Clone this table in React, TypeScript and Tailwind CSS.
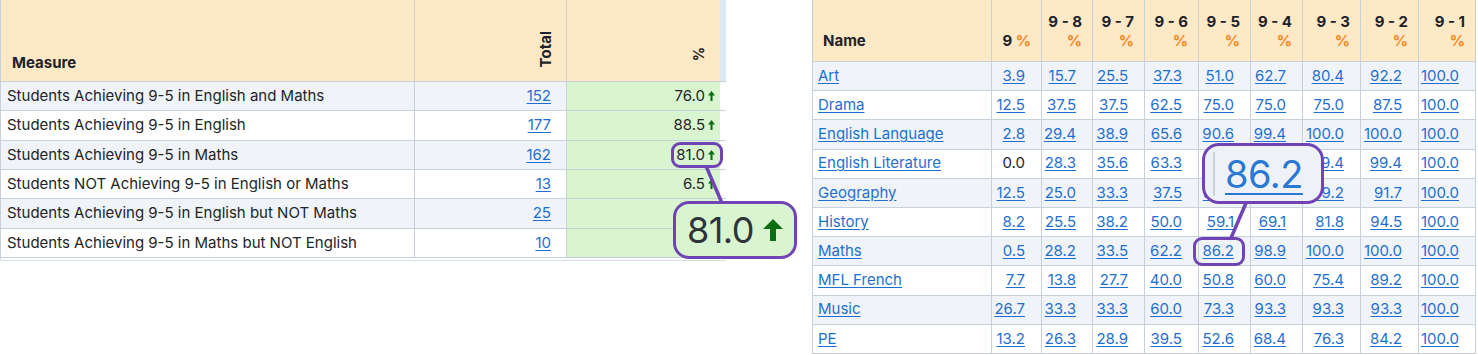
import React from 'react';

type MeasureRow = {
  label: string;
  total: number;
  pct: string;
};

const measures: MeasureRow[] = [
  { label: 'Students Achieving 9-5 in English and Maths', total: 152, pct: '76.0' },
  { label: 'Students Achieving 9-5 in English', total: 177, pct: '88.5' },
  { label: 'Students Achieving 9-5 in Maths', total: 162, pct: '81.0' },
  { label: 'Students NOT Achieving 9-5 in English or Maths', total: 13, pct: '6.5' },
  { label: 'Students Achieving 9-5 in English but NOT Maths', total: 25, pct: '12.5' },
  { label: 'Students Achieving 9-5 in Maths but NOT English', total: 10, pct: '5.0' },
];

const gradeCols = ['9', '9 - 8', '9 - 7', '9 - 6', '9 - 5', '9 - 4', '9 - 3', '9 - 2', '9 - 1'];
const gradeWidths = ['w-[50px]', 'w-[51px]', 'w-[52px]', 'w-[54px]', 'w-[52px]', 'w-[52px]', 'w-[58px]', 'w-[58px]', 'w-[57px]'];

const subjects: { name: string; values: string[] }[] = [
  { name: 'Art', values: ['3.9', '15.7', '25.5', '37.3', '51.0', '62.7', '80.4', '92.2', '100.0'] },
  { name: 'Drama', values: ['12.5', '37.5', '37.5', '62.5', '75.0', '75.0', '75.0', '87.5', '100.0'] },
  { name: 'English Language', values: ['2.8', '29.4', '38.9', '65.6', '90.6', '99.4', '100.0', '100.0', '100.0'] },
  { name: 'English Literature', values: ['0.0', '28.3', '35.6', '63.3', '83.9', '96.1', '99.4', '99.4', '100.0'] },
  { name: 'Geography', values: ['12.5', '25.0', '33.3', '37.5', '58.3', '70.8', '79.2', '91.7', '100.0'] },
  { name: 'History', values: ['8.2', '25.5', '38.2', '50.0', '59.1', '69.1', '81.8', '94.5', '100.0'] },
  { name: 'Maths', values: ['0.5', '28.2', '33.5', '62.2', '86.2', '98.9', '100.0', '100.0', '100.0'] },
  { name: 'MFL French', values: ['7.7', '13.8', '27.7', '40.0', '50.8', '60.0', '75.4', '89.2', '100.0'] },
  { name: 'Music', values: ['26.7', '33.3', '33.3', '60.0', '73.3', '93.3', '93.3', '93.3', '100.0'] },
  { name: 'PE', values: ['13.2', '26.3', '28.9', '39.5', '52.6', '68.4', '76.3', '84.2', '100.0'] },
];

function UpArrow({ className }: { className?: string }) {
  return (
    <svg viewBox="0 0 8 10" preserveAspectRatio="none" className={className} aria-hidden>
      <path d="M4 0 L8 4.6 H5.2 V10 H2.8 V4.6 H0 Z" fill="currentColor" />
    </svg>
  );
}

function MeasureTable() {
  return (
    <div className="w-[726px] shrink-0">
      <table className="table-fixed border-separate border-spacing-0 w-[726px] text-[15px] text-[#212529]">
        <colgroup>
          <col className="w-[415px]" />
          <col className="w-[152px]" />
          <col className="w-[153px]" />
          <col className="w-[6px]" />
        </colgroup>
        <thead>
          <tr className="h-[82px]">
            <th className="bg-[#fde9c5] border-l border-r border-b border-[#c6d1dc] text-left align-bottom pl-[11px] pb-[9px] text-[15px] font-bold text-[#1d232b] leading-[19px]">
              Measure
            </th>
            <th className="bg-[#fde9c5] border-r border-b border-[#c6d1dc] align-bottom p-0">
              <div className="flex justify-end items-end pr-[13px] pb-[14px]">
                <span className="[writing-mode:vertical-rl] rotate-180 text-[15px] font-bold text-[#1d232b] leading-[14px]">
                  Total
                </span>
              </div>
            </th>
            <th className="bg-[#fde9c5] border-b border-[#c6d1dc] align-bottom p-0">
              <div className="flex justify-end items-end pr-[15px] pb-[20px]">
                <span className="[writing-mode:vertical-rl] rotate-180 text-[14px] font-bold text-[#1d232b] leading-[12px]">
                  %
                </span>
              </div>
            </th>
            <th className="bg-[#dce9f2] border-b border-[#c6d1dc] p-0" />
          </tr>
        </thead>
        <tbody>
          {measures.map((m, i) => {
            const bg = i % 2 === 0 ? 'bg-[#f0f4f8]' : 'bg-white';
            return (
              <tr key={m.label} className="h-[29.33px]">
                <td className={`${bg} border-l border-r border-b border-[#c6d1dc] pl-[6px] whitespace-nowrap`}>
                  {m.label}
                </td>
                <td className={`${bg} border-r border-b border-[#c6d1dc] text-right pr-[15px]`}>
                  <a href="#" className="text-[#1f6fd0] underline underline-offset-2">
                    {m.total}
                  </a>
                </td>
                <td className="bg-[#d9f5d0] border-b border-[#c6d1dc] pr-[5px]">
                  <div className="flex items-center justify-end gap-[3px]">
                    <span>{m.pct}</span>
                    <UpArrow className="w-[7px] h-[10px] text-[#0c6e12]" />
                  </div>
                </td>
                <td className="border-b border-[#c6d1dc] p-0" />
              </tr>
            );
          })}
        </tbody>
      </table>
      <div className="h-[3px] border-l border-b border-[#d6dee6] w-[726px]" />
    </div>
  );
}

function GradeTable() {
  return (
    <table className="table-fixed border-separate border-spacing-0 w-[664px] shrink-0 text-[15px] text-[#212529]">
      <colgroup>
        <col className="w-[180px]" />
        {gradeWidths.map((w, i) => (
          <col key={i} className={w} />
        ))}
      </colgroup>
      <thead>
        <tr className="h-[62px]">
          <th className="bg-[#fde9c5] border-l border-r border-b border-[#c6d1dc] text-left align-bottom pl-[10px] pb-[11px] text-[15px] font-bold text-[#1d232b] leading-[19px]">
            Name
          </th>
          {gradeCols.map((g) => (
            <th
              key={g}
              className="bg-[#fde9c5] border-r border-b border-[#c6d1dc] text-right align-bottom pr-[10px] pb-[11px] text-[15px] font-bold text-[#1d232b] leading-[19px] whitespace-nowrap"
            >
              {g === '9' ? (
                <span>
                  9 <span className="text-[#f7841e]">%</span>
                </span>
              ) : (
                <>
                  <div>{g}</div>
                  <div className="text-[#f7841e]">%</div>
                </>
              )}
            </th>
          ))}
        </tr>
      </thead>
      <tbody>
        {subjects.map((s, i) => {
          const bg = i % 2 === 0 ? 'bg-[#f0f4f8]' : 'bg-white';
          return (
            <tr key={s.name} className="h-[29.2px]">
              <td className={`${bg} border-l border-r border-b border-[#c6d1dc] pl-[5px] whitespace-nowrap`}>
                <a href="#" className="text-[#1f6fd0] underline underline-offset-2">
                  {s.name}
                </a>
              </td>
              {s.values.map((v, j) => (
                <td key={j} className={`${bg} border-r border-b border-[#c6d1dc] text-right pr-[16px]`}>
                  {s.name === 'English Literature' && j === 0 ? (
                    <span>{v}</span>
                  ) : (
                    <a href="#" className="text-[#1f6fd0] underline underline-offset-2">
                      {v}
                    </a>
                  )}
                </td>
              ))}
            </tr>
          );
        })}
      </tbody>
    </table>
  );
}

export default function App() {
  return (
    <div className="relative w-[1478px] h-[355px] overflow-hidden bg-white font-['Inter','Noto_Sans',sans-serif]">
      <div className="flex items-start gap-[86px]">
        <MeasureTable />
        <GradeTable />
      </div>

      {/* zoom callouts */}
      <svg className="absolute inset-0 w-[1478px] h-[355px] pointer-events-none" viewBox="0 0 1478 355">
        <line x1="706" y1="166" x2="722" y2="203" stroke="#7044b4" strokeWidth="3.5" />
        <line x1="1231" y1="238" x2="1246" y2="203" stroke="#7044b4" strokeWidth="3.5" />
      </svg>

      <div className="absolute left-[671px] top-[142px] w-[52px] h-[26px] rounded-[9px] border-[3px] border-[#7044b4]" />
      <div className="absolute left-[673px] top-[201px] w-[124px] h-[58px] rounded-[16px] border-[3px] border-[#7044b4] bg-[#d9f5d0] flex items-center justify-center gap-[9px]">
        <span className="text-[36px] leading-none tracking-[-0.5px] text-[#2f3438]">81.0</span>
        <UpArrow className="w-[20px] h-[22px] text-[#0c6e12]" />
      </div>

      <div className="absolute left-[1193px] top-[237px] w-[52px] h-[29px] rounded-[9px] border-[3px] border-[#7044b4]" />
      <div className="absolute left-[1202px] top-[143px] w-[122px] h-[61px] rounded-[17px] border-[3px] border-[#7044b4] bg-[#eef2f6] flex items-center overflow-hidden">
        <div className="ml-[8px] w-[2px] h-[44px] bg-[#c9d2db]" />
        <a href="#" className="ml-[10px] text-[38px] leading-none tracking-[-0.5px] text-[#2a78d2] underline decoration-[2px] underline-offset-[5px]">
          86.2
        </a>
      </div>
    </div>
  );
}
